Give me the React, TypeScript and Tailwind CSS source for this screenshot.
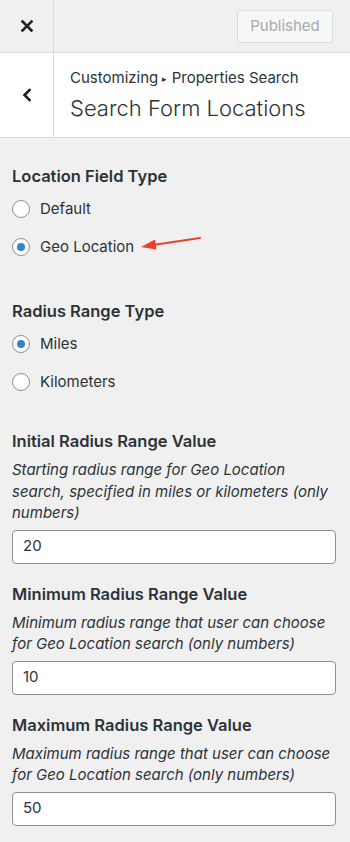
import React from "react";

const font = { fontFamily: "Inter, 'Noto Sans', sans-serif" };

const Radio = ({ label, checked }: { label: string; checked?: boolean }) => (
  <label className="flex items-center gap-[10px] h-[38px] text-[15px] text-[#2c3338]">
    <span className="w-[18px] h-[18px] rounded-full border border-[#8c8f94] bg-white flex items-center justify-center shrink-0">
      {checked && <span className="w-[8px] h-[8px] rounded-full bg-[#3582c4]" />}
    </span>
    {label}
  </label>
);

const Field = ({ title, desc, value }: { title: string; desc: string; value: string }) => (
  <div className="flex flex-col">
    <h3 className="text-[16.5px] font-semibold text-[#2c3338] leading-[22px]">{title}</h3>
    <p className="mt-[7px] text-[15px] italic text-[#2c3338] leading-[21.5px]">{desc}</p>
    <div className="mt-[6px] h-[34px] rounded-[4px] border border-[#8c8f94] bg-white flex items-center px-[10px] text-[15px] text-[#2c3338]">
      {value}
    </div>
  </div>
);

const App = () => {
  return (
    <div className="w-[350px] min-h-[842px] bg-[#f0f0f0]" style={font}>
      <div className="h-[53px] flex border-b border-[#dcdcde] bg-[#f0f0f0]">
        <div className="w-[54px] border-r border-[#dcdcde] flex items-center justify-center">
          <svg width="14" height="14" viewBox="0 0 14 14">
            <path d="M2.5 2.5 L11.5 11.5 M11.5 2.5 L2.5 11.5" stroke="#1d2327" strokeWidth="2.6" strokeLinecap="square" />
          </svg>
        </div>
        <div className="flex-1 flex items-center justify-end pr-[17px]">
          <div className="w-[96px] h-[33px] rounded-[3px] border border-[#dcdcde] bg-[#f6f7f7] flex items-center justify-center text-[15px] text-[#a7aaad]">
            Published
          </div>
        </div>
      </div>

      <div className="h-[85px] flex bg-white border-b border-[#dcdcde]">
        <div className="w-[54px] border-r border-[#dcdcde] flex items-center justify-center">
          <svg width="12" height="16" viewBox="0 0 12 16">
            <path d="M8.5 3 L3.5 8 L8.5 13" stroke="#1d2327" strokeWidth="2.6" fill="none" strokeLinecap="square" />
          </svg>
        </div>
        <div className="flex flex-col justify-center pl-[16px] pb-[1px]">
          <div className="text-[15px] text-[#2c3338] leading-[20px]">
            Customizing <span className="text-[9px] align-[1px]">▸</span> Properties Search
          </div>
          <div className="mt-[5px] text-[22px] font-light text-[#2c3338] leading-[28px]">Search Form Locations</div>
        </div>
      </div>

      <div className="pl-[12px] pr-[14px] pt-[27px] pb-[16px]">
        <div className="relative">
          <h3 className="text-[16.5px] font-semibold text-[#2c3338] leading-[22px]">Location Field Type</h3>
          <div className="mt-[3px] flex flex-col">
            <Radio label="Default" />
            <Radio label="Geo Location" checked />
          </div>
          <svg className="absolute left-[127px] top-[71px]" width="64" height="16" viewBox="0 0 64 16">
            <path d="M61 2 L14 9" stroke="#e8412c" strokeWidth="2.2" strokeLinecap="round" />
            <path d="M2 11 L16 3.5 L17.5 13.5 Z" fill="#e8412c" />
          </svg>
        </div>

        <div className="mt-[34px]">
          <h3 className="text-[16.5px] font-semibold text-[#2c3338] leading-[22px]">Radius Range Type</h3>
          <div className="mt-[3px] flex flex-col">
            <Radio label="Miles" checked />
            <Radio label="Kilometers" />
          </div>
        </div>

        <div className="mt-[29px] flex flex-col gap-[19px]">
          <Field
            title="Initial Radius Range Value"
            desc="Starting radius range for Geo Location search, specified in miles or kilometers (only numbers)"
            value="20"
          />
          <Field
            title="Minimum Radius Range Value"
            desc="Minimum radius range that user can choose for Geo Location search (only numbers)"
            value="10"
          />
          <Field
            title="Maximum Radius Range Value"
            desc="Maximum radius range that user can choose for Geo Location search (only numbers)"
            value="50"
          />
        </div>
      </div>
    </div>
  );
};

export default App;
